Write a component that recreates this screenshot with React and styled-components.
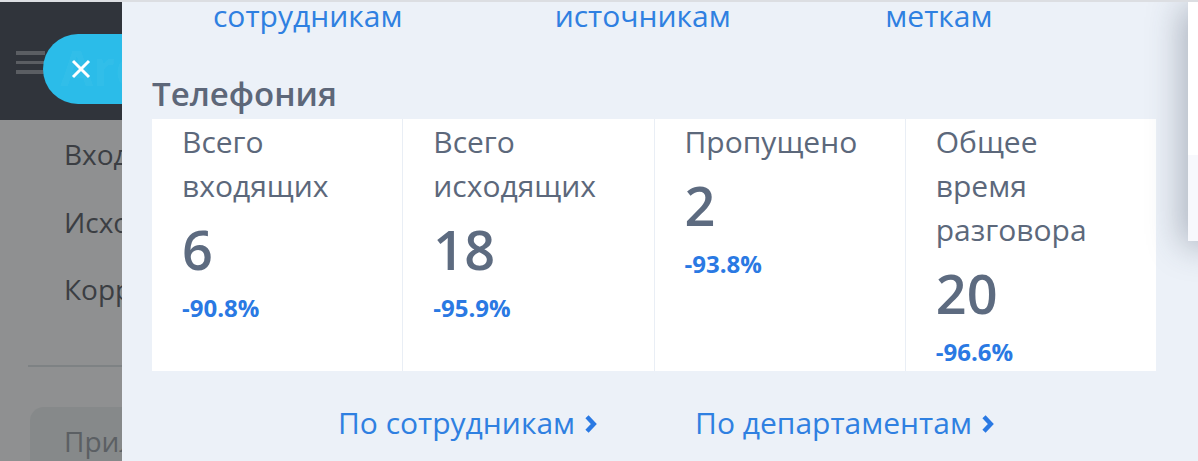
import styled, { createGlobalStyle } from "styled-components";

const GlobalStyle = createGlobalStyle`
  html, body {
    margin: 0;
    padding: 0;
    height: 100%;
    overflow: hidden;
  }
  body {
    font-family: "Open Sans", "Noto Sans", sans-serif;
  }
`;

const stats = [
  { label: ["Всего", "входящих"], value: "6", change: "-90.8%" },
  { label: ["Всего", "исходящих"], value: "18", change: "-95.9%" },
  { label: ["Пропущено"], value: "2", change: "-93.8%" },
  { label: ["Общее", "время", "разговора"], value: "20", change: "-96.6%" },
];

const App = () => {
  return (
    <Page>
      <GlobalStyle />
      <TopStrip />
      <Body>
        <Sidebar>
          <SideHeader>
            <Burger>
              <span />
              <span />
              <span />
            </Burger>
            <Pill>
              <PillText>Arc</PillText>
              <CloseIcon viewBox="0 0 20 20">
                <path d="M2 2 L18 18 M18 2 L2 18" />
              </CloseIcon>
            </Pill>
          </SideHeader>
          <SideMenu>
            <MenuItem>Входящие</MenuItem>
            <MenuItem>Исходящие</MenuItem>
            <MenuItem>Корреспонденция</MenuItem>
            <Divider />
            <AppsBox>Приложения</AppsBox>
          </SideMenu>
        </Sidebar>

        <Panel>
          <TopLinks>
            <TopLink indent={61}>сотрудникам</TopLink>
            <TopLink indent={68}>источникам</TopLink>
            <TopLink indent={64}>меткам</TopLink>
          </TopLinks>

          <Heading>Телефония</Heading>

          <StatsCard>
            {stats.map((s) => (
              <StatCell key={s.value}>
                <Label>
                  {s.label.map((l) => (
                    <div key={l}>{l}</div>
                  ))}
                </Label>
                <Value>{s.value}</Value>
                <Change>{s.change}</Change>
              </StatCell>
            ))}
          </StatsCard>

          <BottomLinks>
            <MoreLink>
              По сотрудникам
              <Chevron />
            </MoreLink>
            <MoreLink>
              По департаментам
              <Chevron />
            </MoreLink>
          </BottomLinks>

          <SideCard>
            <SideCardBottom />
          </SideCard>
        </Panel>
      </Body>
    </Page>
  );
};

const Chevron = () => (
  <ChevronSvg viewBox="0 0 13 20">
    <path d="M3 2.8 L9.8 10 L3 17.2" />
  </ChevronSvg>
);

const Page = styled.div`
  height: 100vh;
  display: flex;
  flex-direction: column;
  background: #ecf1f8;
`;

const TopStrip = styled.div`
  height: 2px;
  background: #dcdee2;
  flex-shrink: 0;
`;

const Body = styled.div`
  flex: 1;
  display: flex;
  min-height: 0;
`;

const Sidebar = styled.aside`
  width: 122px;
  flex-shrink: 0;
  display: flex;
  flex-direction: column;
  overflow: hidden;
  background: #8f9091;
`;

const SideHeader = styled.div`
  height: 118px;
  flex-shrink: 0;
  background: #30343b;
  display: flex;
  align-items: flex-start;
  padding-left: 16px;
`;

const Burger = styled.div`
  width: 29px;
  margin-top: 49px;
  display: flex;
  flex-direction: column;
  gap: 6px;
  flex-shrink: 0;

  span {
    display: block;
    height: 3.5px;
    background: #5b5e63;
  }
`;

const Pill = styled.div`
  position: relative;
  flex: 1;
  height: 70px;
  margin-top: 32px;
  margin-left: -2px;
  border-radius: 35px 0 0 35px;
  background: #2bbce9;
  overflow: hidden;
`;

const PillText = styled.div`
  padding: 6px 0 0 17px;
  font-size: 48px;
  font-weight: 700;
  line-height: 56px;
  color: rgba(255, 255, 255, 0.035);
  white-space: nowrap;
`;

const CloseIcon = styled.svg`
  position: absolute;
  left: 28px;
  top: 25px;
  width: 20px;
  height: 20px;
  fill: none;
  stroke: #ffffff;
  stroke-width: 3;
`;

const SideMenu = styled.nav`
  display: flex;
  flex-direction: column;
  padding-top: 1px;
`;

const MenuItem = styled.div`
  padding-left: 64px;
  font-size: 28px;
  line-height: 67.5px;
  color: #3b3e43;
  white-space: nowrap;
`;

const Divider = styled.div`
  height: 2px;
  margin: 41px 0 0 28px;
  background: #7e8284;
`;

const AppsBox = styled.div`
  margin: 40px 0 0 30px;
  height: 80px;
  border-radius: 14px 0 0 14px;
  background: #86898a;
  padding: 14px 0 0 34px;
  font-size: 28px;
  line-height: 40px;
  color: #5b5f63;
  white-space: nowrap;
`;

const Panel = styled.main`
  position: relative;
  flex: 1;
  display: flex;
  flex-direction: column;
  padding: 0 42px 0 30px;
  background: #ecf1f8;
  border-top-left-radius: 10px;
  overflow: hidden;
`;

const TopLinks = styled.div`
  display: grid;
  grid-template-columns: repeat(3, 1fr);
  margin-top: -8px;
`;

const TopLink = styled.a`
  padding-left: ${(p) => p.indent}px;
  font-size: 30px;
  line-height: 44px;
  color: #2f80e1;
  white-space: nowrap;
`;

const Heading = styled.h2`
  margin: 34px 0 3px;
  font-size: 33px;
  font-weight: 600;
  line-height: 44px;
  color: #5d6779;
`;

const StatsCard = styled.div`
  display: grid;
  grid-template-columns: repeat(4, 1fr);
  gap: 1px;
  background: #e9eef5;
`;

const StatCell = styled.div`
  background: #ffffff;
  padding: 1px 20px 3px 30px;
  display: flex;
  flex-direction: column;
`;

const Label = styled.div`
  font-size: 30px;
  line-height: 44px;
  color: #5c687b;
`;

const Value = styled.div`
  margin-top: 9px;
  font-size: 54px;
  font-weight: 600;
  line-height: 64px;
  color: #5d6b80;
`;

const Change = styled.div`
  margin-top: 11px;
  font-size: 24px;
  font-weight: 700;
  line-height: 32px;
  color: #2a79e3;
`;

const BottomLinks = styled.div`
  display: flex;
  gap: 98px;
  margin-top: 30px;
  padding-left: 186px;
`;

const MoreLink = styled.a`
  display: flex;
  align-items: center;
  gap: 9px;
  font-size: 30px;
  line-height: 44px;
  color: #2f80e1;
  white-space: nowrap;
`;

const ChevronSvg = styled.svg`
  width: 13px;
  height: 20px;
  margin-top: 2px;
  fill: none;
  stroke: #2a79e3;
  stroke-width: 4.4;
  stroke-linejoin: miter;
`;

const SideCard = styled.div`
  position: absolute;
  top: 0;
  right: -40px;
  width: 50px;
  height: 239px;
  background: #ffffff;
  box-shadow: -6px 4px 34px rgba(50, 60, 80, 0.35);
  display: flex;
  flex-direction: column;
  justify-content: flex-end;
`;

const SideCardBottom = styled.div`
  height: 86px;
  background: #f7f8fc;
`;

export default App;
